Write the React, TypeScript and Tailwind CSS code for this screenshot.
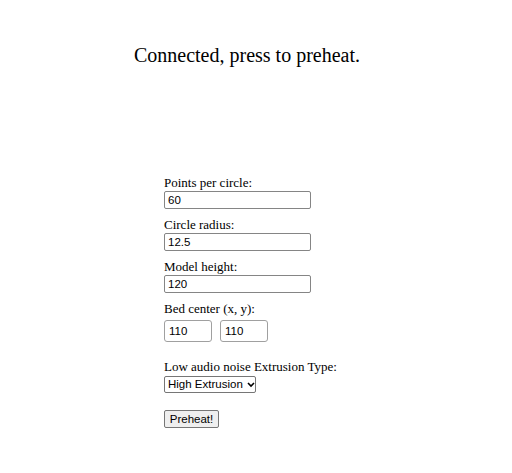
import React from "react";

const sans = { fontFamily: '"Liberation Sans", Arial, sans-serif' };

export default function App() {
  const inputCls =
    "block w-[147px] h-[18px] border border-[#858585] rounded-[2px] px-[3px] text-[11.5px] leading-[14px] text-black bg-white outline-none";
  const labelCls = "block h-[13px] leading-[13px] text-[13px] mb-[2px]";
  return (
    <div className="w-[512px] h-[473px] bg-white text-black" style={{ fontFamily: '"Liberation Serif", "Times New Roman", serif' }}>
      <div className="pt-[44px] w-[494px] text-center text-[20px] leading-[23px]">
        Connected, press to preheat.
      </div>
      <div className="pl-[164px] pt-[109px]">
        <label className={labelCls}>Points per circle:</label>
        <input className={inputCls} style={sans} defaultValue="60" />
        <label className={labelCls + " mt-[9px]"}>Circle radius:</label>
        <input className={inputCls} style={sans} defaultValue="12.5" />
        <label className={labelCls + " mt-[9px]"}>Model height:</label>
        <input className={inputCls} style={sans} defaultValue="120" />
        <label className={labelCls + " mt-[9px]"}>Bed center (x, y):</label>
        <div className="flex gap-[8px] mt-[5px]">
          <input className="block w-[48px] h-[22px] border border-[#a0a0a0] rounded-[3px] px-[4px] text-[11.5px] text-black bg-white outline-none" style={sans} defaultValue="110" />
          <input className="block w-[48px] h-[22px] border border-[#a0a0a0] rounded-[3px] px-[4px] text-[11.5px] text-black bg-white outline-none" style={sans} defaultValue="110" />
        </div>
        <label className={labelCls + " mt-[18px]"}>Low audio noise Extrusion Type:</label>
        <div className="mt-[3px] flex items-center whitespace-nowrap w-[92px] h-[17px] border border-[#767676] rounded-[2px] bg-white text-[11.5px] leading-[15px] pl-[3px]" style={sans}>
          <span>High Extrusion</span>
          <svg width="8" height="6" viewBox="0 0 8 6" className="ml-[4px]">
            <path d="M1 1 L4 4 L7 1" stroke="black" strokeWidth="1.6" fill="none" />
          </svg>
        </div>
        <button className="mt-[17px] block w-[55px] h-[18px] border border-[#767676] rounded-[2px] bg-[#efefef] text-[11.5px] leading-[16px] whitespace-nowrap" style={sans}>
          Preheat!
        </button>
      </div>
    </div>
  );
}
